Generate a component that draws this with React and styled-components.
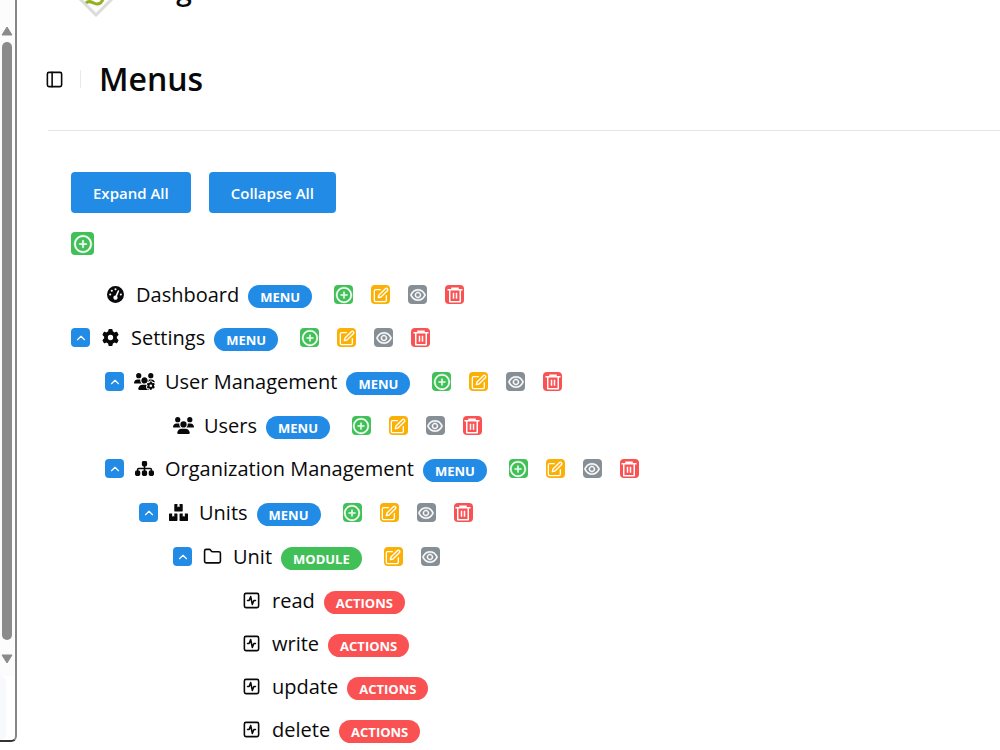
import styled, { createGlobalStyle } from "styled-components";
import { FaGaugeHigh, FaGear, FaUsersGear, FaUsers, FaSitemap } from "react-icons/fa6";
import { FaBoxes } from "react-icons/fa";
import { AiOutlinePlusCircle, AiOutlineEye } from "react-icons/ai";
import { RiDeleteBin6Line } from "react-icons/ri";
import { LuFolder, LuSquareActivity, LuPanelLeft, LuChevronUp } from "react-icons/lu";
import { FiEdit } from "react-icons/fi";

const icons = {
  dashboard: { Icon: FaGaugeHigh, size: 17 },
  settings: { Icon: FaGear, size: 17 },
  userManagement: { Icon: FaUsersGear, size: 21 },
  users: { Icon: FaUsers, size: 21 },
  organization: { Icon: FaSitemap, size: 19 },
  units: { Icon: FaBoxes, size: 19 },
  module: { Icon: LuFolder, size: 19 },
  action: { Icon: LuSquareActivity, size: 19 },
};

const menus = [
  { name: "Dashboard", type: "menu", icon: "dashboard" },
  {
    name: "Settings", type: "menu", icon: "settings", children: [
      {
        name: "User Management", type: "menu", icon: "userManagement", children: [
          { name: "Users", type: "menu", icon: "users" },
        ],
      },
      {
        name: "Organization Management", type: "menu", icon: "organization", children: [
          {
            name: "Units", type: "menu", icon: "units", children: [
              {
                name: "Unit", type: "module", icon: "module", children: [
                  { name: "read", type: "actions", icon: "action" },
                  { name: "write", type: "actions", icon: "action" },
                  { name: "update", type: "actions", icon: "action" },
                  { name: "delete", type: "actions", icon: "action" },
                ],
              },
            ],
          },
        ],
      },
    ],
  },
];

// stroke is in the units of each icon's own viewBox
const tools = {
  add: { label: "Add", color: "#40c057", Icon: AiOutlinePlusCircle, size: 18, stroke: 24 },
  edit: { label: "Edit", color: "#fab005", Icon: FiEdit, size: 16, stroke: 2 },
  view: { label: "View", color: "#868e96", Icon: AiOutlineEye, size: 18, stroke: 24 },
  remove: { label: "Delete", color: "#fa5252", Icon: RiDeleteBin6Line, size: 18, stroke: 0 },
};

const toolsByType = {
  menu: ["add", "edit", "view", "remove"],
  module: ["edit", "view"],
  actions: [],
};

const badgeColors = { menu: "#228be6", module: "#40c057", actions: "#fa5252" };

const MenuItem = ({ item }) => {
  const { Icon, size } = icons[item.icon];

  return (
    <li>
      <Row>
        {item.children ? (
          <Toggle type="button" aria-label={"Collapse " + item.name}><LuChevronUp size={14} /></Toggle>
        ) : (
          <Spacer />
        )}
        <ItemIcon><Icon size={size} /></ItemIcon>
        <Name>{item.name}</Name>
        <Badge $color={badgeColors[item.type]}>{item.type}</Badge>
        <Tools>
          {toolsByType[item.type].map((key) => {
            const { label, color, Icon: ToolIcon, size: toolSize, stroke } = tools[key];
            return (
              <IconButton key={key} type="button" $color={color} aria-label={label + " " + item.name}>
                <ToolIcon size={toolSize} strokeWidth={stroke} />
              </IconButton>
            );
          })}
        </Tools>
      </Row>
      {item.children && (
        <SubTree>
          {item.children.map((child) => <MenuItem key={child.name} item={child} />)}
        </SubTree>
      )}
    </li>
  );
};

const App = () => {
  return (
    <Page>
      <GlobalStyle />
      <Sidebar>
        <Scrollbar>
          <Arrow viewBox="0 0 12 10"><path d="M6 1 L11 9 H1 Z" /></Arrow>
          <Thumb />
          <Arrow viewBox="0 0 12 10"><path d="M6 9 L11 1 H1 Z" /></Arrow>
        </Scrollbar>
        <Footer />
      </Sidebar>
      <Main>
        <Brand>
          <Logo viewBox="0 0 44 44">
            <path d="M22 2 L42 22 L22 42 L2 22 Z" fill="#fcfcfc" stroke="#dcdcdc" strokeWidth="3" />
            <path d="M12 30 C16 26 19 31 23 31 C26 31 28 29 29 26" fill="none" stroke="#93b01f" strokeWidth="3" />
          </Logo>
          <BrandName>Org</BrandName>
        </Brand>
        <Header>
          <PanelButton type="button" aria-label="Toggle sidebar"><LuPanelLeft size={19} /></PanelButton>
          <Divider />
          <h1>Menus</h1>
        </Header>
        <Content>
          <Actions>
            <Button type="button">Expand All</Button>
            <Button type="button">Collapse All</Button>
          </Actions>
          <IconButton type="button" $color="#40c057" $large aria-label="Add menu">
            <AiOutlinePlusCircle size={20} strokeWidth={24} />
          </IconButton>
          <Tree>
            {menus.map((item) => <MenuItem key={item.name} item={item} />)}
          </Tree>
        </Content>
      </Main>
    </Page>
  );
};

const GlobalStyle = createGlobalStyle`
  * {
    box-sizing: border-box;
  }
  body {
    margin: 0;
    background: #fff;
    color: #09090b;
    font-family: "Open Sans", "Noto Sans", sans-serif;
    overflow: hidden;
  }
  h1, ul {
    margin: 0;
    padding: 0;
  }
  ul {
    list-style: none;
  }
  button {
    border: 0;
    padding: 0;
    font-family: inherit;
    cursor: pointer;
  }
  svg {
    display: block;
    flex-shrink: 0;
  }
`;

const Page = styled.div`
  display: flex;
  height: 100vh;
`;

const Sidebar = styled.aside`
  display: flex;
  flex-direction: column;
  width: 17px;
  height: calc(100vh - 8px);
  flex-shrink: 0;
  border-right: 2px solid #858585;
  border-bottom: 2px solid #333;
  border-radius: 0 0 6px 0;
`;

const Scrollbar = styled.div`
  display: flex;
  flex-direction: column;
  align-items: center;
  flex: 1;
  gap: 6px;
  width: 14px;
  padding: 26px 0 12px;
  background: #fcfcfc;
`;

const Arrow = styled.svg`
  width: 12px;
  height: 10px;
  fill: #8b8b8b;
  stroke: #8b8b8b;
  stroke-linejoin: round;
`;

const Thumb = styled.div`
  flex: 1;
  width: 10px;
  margin-bottom: 8px;
  border-radius: 5px;
  background: #8b8b8b;
`;

const Footer = styled.div`
  height: 64px;
  width: 6px;
  background: #f8f9fc;
  border-radius: 0 6px 6px 0;
`;

const Main = styled.main`
  flex: 1;
  min-width: 0;
  height: 100vh;
  overflow: hidden;
`;

const Brand = styled.div`
  display: flex;
  align-items: flex-end;
  gap: 24px;
  height: 28px;
  padding: 0 0 11px 57px;
`;

const Logo = styled.svg`
  width: 44px;
  height: 44px;
`;

const BrandName = styled.span`
  margin-bottom: 14px;
  font-size: 28px;
  line-height: 28px;
  font-weight: 600;
`;

const Header = styled.header`
  display: flex;
  align-items: center;
  height: 103px;
  margin-left: 31px;
  border-bottom: 1px solid #e4e4e7;

  h1 {
    font-size: 32px;
    font-weight: 600;
    line-height: 40px;
  }
`;

const PanelButton = styled.button`
  margin-left: -3px;
  background: none;
  color: #09090b;
`;

const Divider = styled.span`
  width: 1px;
  height: 18px;
  margin: 0 18px 0 16px;
  background: #e9e9ec;
`;

const Content = styled.div`
  padding: 41px 54px 0;
`;

const Actions = styled.div`
  display: flex;
  gap: 18px;
  margin-bottom: 19px;
`;

const Button = styled.button`
  height: 41px;
  padding: 0 22px;
  border-radius: 4px;
  background: #228be6;
  color: #fff;
  font-size: 15px;
  font-weight: 600;
`;

const IconButton = styled.button`
  display: flex;
  align-items: center;
  justify-content: center;
  width: ${({ $large }) => ($large ? 23 : 19)}px;
  height: ${({ $large }) => ($large ? 23 : 19)}px;
  border-radius: 4px;
  background: ${({ $color }) => $color};
  color: #fff;
`;

const Tree = styled.ul`
  padding-top: 18px;
`;

const SubTree = styled.ul`
  padding: 1px 0 0 34px;
`;

const Row = styled.div`
  display: flex;
  align-items: center;
  height: 43px;
`;

const Toggle = styled(IconButton).attrs({ $color: "#228be6" })`
  margin-right: 11px;
`;

const Spacer = styled.span`
  width: 35px;
`;

const ItemIcon = styled.span`
  display: flex;
  justify-content: center;
  width: 18px;
  margin-right: 12px;
`;

const Name = styled.span`
  font-size: 20px;
  line-height: 30px;
`;

const Badge = styled.span`
  height: 23px;
  margin: 3px 22px 0 9px;
  padding: 0 12px;
  border-radius: 12px;
  background: ${({ $color }) => $color};
  color: #fff;
  font-size: 13px;
  font-weight: 700;
  line-height: 24px;
  text-transform: uppercase;
`;

const Tools = styled.div`
  display: flex;
  gap: 18px;
`;

export default App;
